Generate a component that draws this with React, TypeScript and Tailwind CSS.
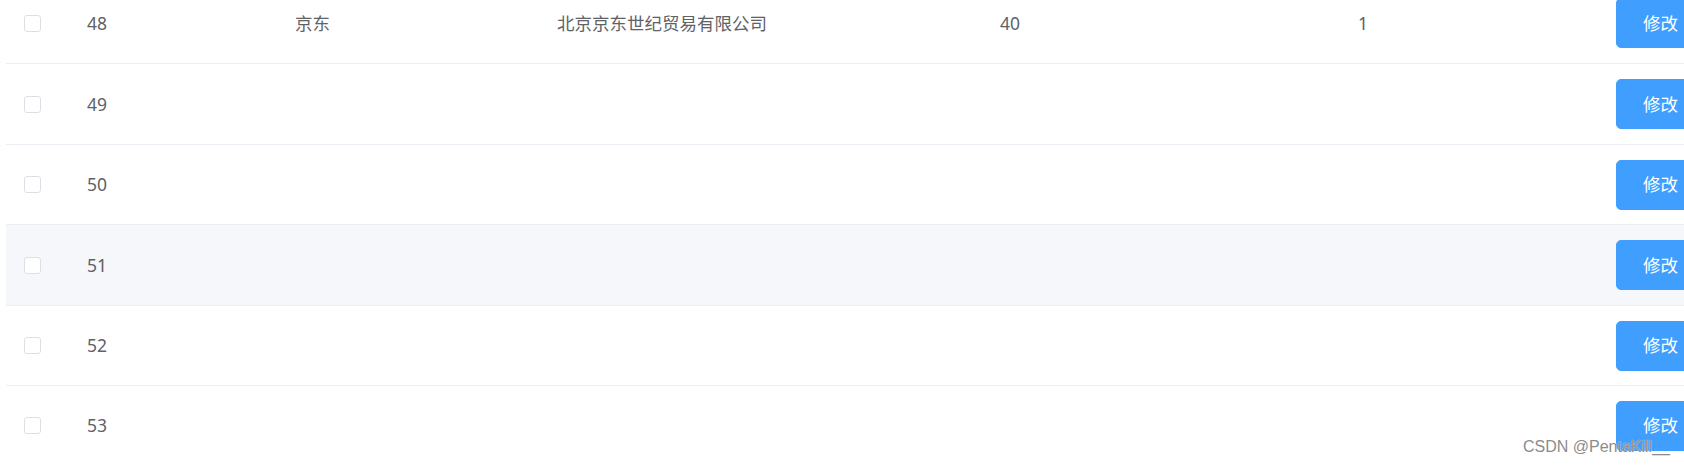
import React from 'react';

interface Row {
  id: number;
  brand?: string;
  company?: string;
  sort?: string;
  status?: string;
}

const rows: Row[] = [
  { id: 48, brand: '京东', company: '北京京东世纪贸易有限公司', sort: '40', status: '1' },
  { id: 49 },
  { id: 50 },
  { id: 51 },
  { id: 52 },
  { id: 53 },
];

// row heights incl. bottom border, the table is scaled ~1.25x
const heights = ['h-[81px]', 'h-[81px]', 'h-[80px]', 'h-[81px]', 'h-[80px]', 'h-[80px]'];

const font = { fontFamily: '"Noto Sans", "Noto Sans CJK SC", sans-serif' };

export default function App() {
  return (
    <div className="relative h-[465px] w-full overflow-hidden bg-white" style={font}>
      <div className="-mt-[17px] ml-[6px] text-[17.5px] text-[#606266]">
        {rows.map((r, i) => (
          <div
            key={r.id}
            className={`flex items-center border-b border-[#ebeef5] ${heights[i]} ${
              r.id === 51 ? 'bg-[#f5f7fa]' : 'bg-white'
            }`}
          >
            <div className="w-[81px] shrink-0 pl-[18px] flex items-center">
              <span className="block h-[17px] w-[17px] rounded-[3px] border border-[#dcdfe6] bg-white" />
            </div>
            <div className="w-[208px] shrink-0">{r.id}</div>
            <div className="w-[262px] shrink-0">{r.brand}</div>
            <div className="w-[443px] shrink-0">{r.company}</div>
            <div className="w-[358px] shrink-0">{r.sort}</div>
            <div className="w-[258px] shrink-0">{r.status}</div>
            <div className="shrink-0">
              <button className="flex h-[50px] items-center rounded-[5px] border border-[#409eff] bg-[#409eff] px-[26px] text-[17.5px] text-white whitespace-nowrap">
                修改
              </button>
            </div>
          </div>
        ))}
      </div>
      <div
        className="absolute left-[1523px] top-[437px] text-[16px] leading-[20px] text-[#8c8c8c] whitespace-nowrap"
        style={{ fontFamily: '"Liberation Sans", Arial, sans-serif', textShadow: '0 0 1px #fff' }}
      >
        CSDN @PentaKill__
      </div>
    </div>
  );
}
